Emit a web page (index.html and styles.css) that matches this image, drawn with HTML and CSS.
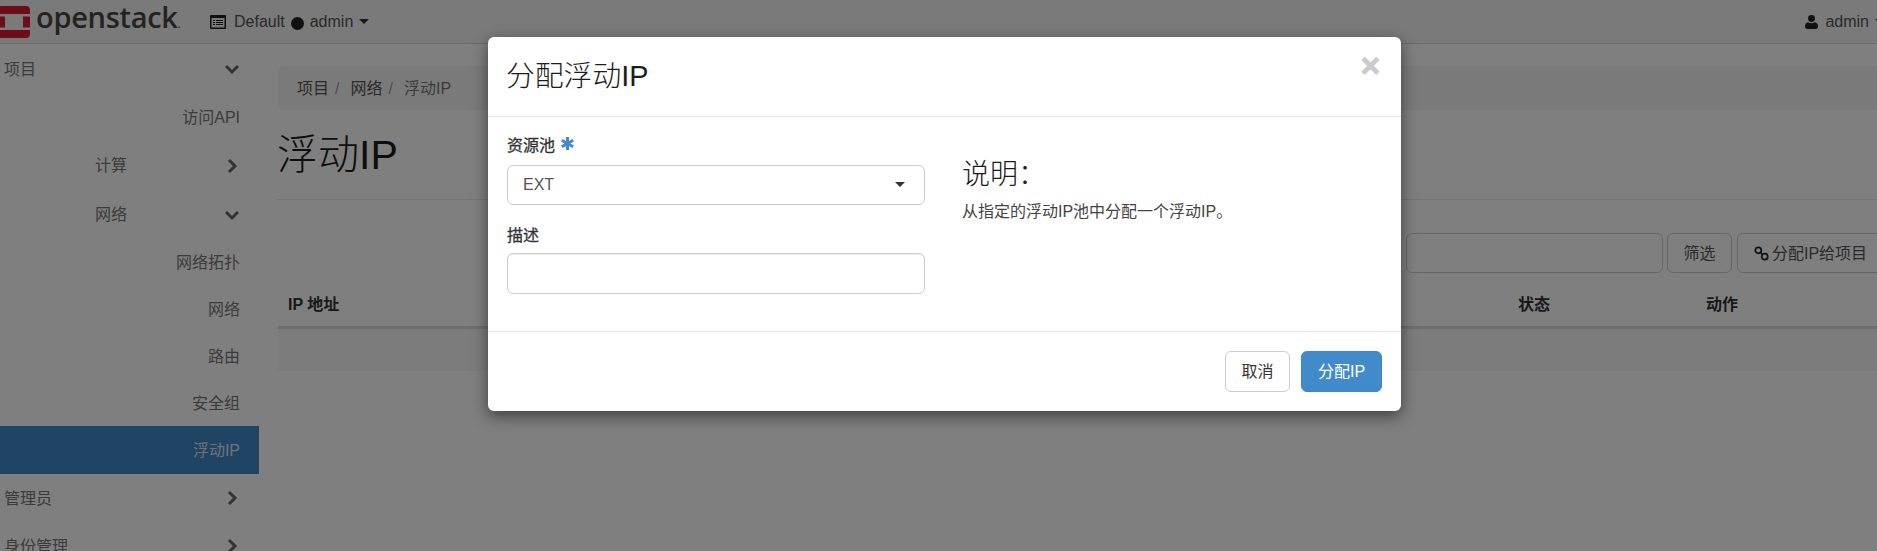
FILE: index.html
```html
<!DOCTYPE html>
<html lang="zh-CN">
<head>
<meta charset="utf-8">
<title>浮动IP</title>
<link rel="stylesheet" href="styles.css">
</head>
<body>
<div class="page">
  <header class="navbar">
    <div class="brand">
      <svg class="brand-mark" width="32" height="32" viewBox="0 0 32 32"><path fill="#dc1a34" fill-rule="evenodd" d="M4 0h24a4 4 0 0 1 4 4v24a4 4 0 0 1-4 4H4a4 4 0 0 1-4-4V4a4 4 0 0 1 4-4zM7 8h18v16H7zM0 8h7v2.500H0zM0 21.500h7V24H0zM25 8h7v2.500h-7zM25 21.500h7V24h-7z"/></svg>
      <span class="brand-name">openstack<span class="brand-dot">.</span></span>
    </div>
    <div class="nav-context">
      <svg class="nav-icon" width="16" height="14" viewBox="0 0 16 14"><path fill="#222" fill-rule="evenodd" d="M1 0h14a1 1 0 0 1 1 1v12a1 1 0 0 1-1 1H1a1 1 0 0 1-1-1V1a1 1 0 0 1 1-1zm.5 3v9.500h13V3zM3 5h2v1H3zm3 0h7v1H6zM3 7h2v1H3zm3 0h7v1H6zM3 9h2v1H3zm3 0h7v1H6z"/></svg>
      <span>Default</span>
      <span class="nav-dot"></span>
      <span>admin</span>
      <span class="caret"></span>
    </div>
    <div class="nav-user">
      <svg width="13" height="14" viewBox="0 0 13 14"><path fill="#222" d="M6.500 0a3.400 3.400 0 0 1 3.400 3.500 3.400 3.400 0 0 1-6.800 0A3.400 3.400 0 0 1 6.500 0zM3.200 7.200c1 .8 2.100 1.100 3.300 1.100s2.300-.3 3.300-1.100c2 .2 3.200 1.800 3.200 4.300 0 1.500-.9 2.500-2.400 2.500H2.400C.9 14 0 13 0 11.500c0-2.500 1.200-4.100 3.200-4.300z"/></svg>
      <span>admin</span>
      <span class="caret"></span>
    </div>
  </header>

  <div class="layout">
    <nav class="sidebar">
      <a class="side-row side-top"><span>项目</span><svg class="chev" width="16" height="16" viewBox="0 0 16 16"><path d="M2 5l6 6 6-6"/></svg></a>
      <a class="side-row side-leaf"><span>访问API</span></a>
      <a class="side-row side-group side-tall"><span>计算</span><svg class="chev" width="16" height="16" viewBox="0 0 16 16"><path d="M5 2l6 6-6 6"/></svg></a>
      <a class="side-row side-group side-tall"><span>网络</span><svg class="chev" width="16" height="16" viewBox="0 0 16 16"><path d="M2 5l6 6 6-6"/></svg></a>
      <a class="side-row side-leaf side-short"><span>网络拓扑</span></a>
      <a class="side-row side-leaf side-short"><span>网络</span></a>
      <a class="side-row side-leaf side-short"><span>路由</span></a>
      <a class="side-row side-leaf side-shorter"><span>安全组</span></a>
      <a class="side-row side-leaf side-active"><span>浮动IP</span></a>
      <a class="side-row side-top"><span>管理员</span><svg class="chev" width="16" height="16" viewBox="0 0 16 16"><path d="M5 2l6 6-6 6"/></svg></a>
      <a class="side-row side-top"><span>身份管理</span><svg class="chev" width="16" height="16" viewBox="0 0 16 16"><path d="M5 2l6 6-6 6"/></svg></a>
    </nav>

    <main class="main">
      <ol class="breadcrumb">
        <li class="crumb-link">项目</li>
        <li class="crumb-sep">/</li>
        <li class="crumb-link">网络</li>
        <li class="crumb-sep">/</li>
        <li class="crumb-current">浮动IP</li>
      </ol>
      <h1 class="page-title">浮动IP</h1>
      <div class="toolbar">
        <div class="filter-input"></div>
        <button class="btn btn-filter">筛选</button>
        <button class="btn btn-assign">
          <svg width="15" height="15" viewBox="0 0 15 15"><g fill="none" stroke="#222" stroke-width="1.700"><circle cx="4.300" cy="4.300" r="3"/><circle cx="10.700" cy="10.700" r="3"/><path d="M6.500 6.500l2 2"/></g></svg>
          <span>分配IP给项目</span>
        </button>
      </div>
      <div class="table-head">
        <span>IP 地址</span>
        <span>状态</span>
        <span>动作</span>
      </div>
      <div class="table-row"></div>
    </main>
  </div>

  <div class="backdrop"></div>

  <section class="modal">
    <div class="modal-header">
      <h2 class="modal-title">分配浮动IP</h2>
      <span class="modal-close">×</span>
    </div>
    <div class="modal-body">
      <form class="modal-form">
        <div class="label label-required">
          <span>资源池</span>
          <svg width="13" height="13" viewBox="0 0 13 13"><path fill="none" stroke="#428bca" stroke-width="3" d="M6.500 0v13M.8 3.200l11.400 6.600M.8 9.800l11.400-6.600"/></svg>
        </div>
        <div class="select"><span>EXT</span><span class="caret"></span></div>
        <div class="label label-desc">描述</div>
        <div class="input"></div>
      </form>
      <div class="modal-help">
        <h3 class="help-title">说明：</h3>
        <p class="help-text">从指定的浮动IP池中分配一个浮动IP。</p>
      </div>
    </div>
    <div class="modal-footer">
      <button class="btn btn-cancel">取消</button>
      <button class="btn btn-primary">分配IP</button>
    </div>
  </section>
</div>
</body>
</html>
```
FILE: styles.css
```css
* { box-sizing: border-box; }

html, body {
  margin: 0;
  height: 100%;
  overflow: hidden;
}

body {
  font-family: "Liberation Sans", "Noto Sans CJK SC", sans-serif;
  font-size: 16px;
  line-height: 23px;
  color: #333;
  background: #fff;
}

.page {
  position: relative;
  width: 1877px;
  height: 551px;
  overflow: hidden;
}

/* Navbar */
.navbar {
  display: flex;
  align-items: center;
  width: 1900px;
  height: 44px;
  background: #f4f4f4;
  border-bottom: 1px solid #d4d4d4;
}

.brand {
  display: flex;
  align-items: center;
  width: 212px;
  margin-left: -2px;
  padding-top: 1px;
}

.brand-mark { display: block; margin-right: 6px; }

.brand-name {
  font-family: "Open Sans", sans-serif;
  font-size: 29px;
  line-height: 32px;
  font-weight: 600;
  letter-spacing: -0.3px;
  color: #4b4745;
  margin-top: -3px;
}

.brand-dot { font-size: 12px; color: #888; letter-spacing: 0; }

.nav-context {
  display: flex;
  align-items: center;
  color: #555;
}

.nav-icon { margin-right: 8px; }

.nav-dot {
  width: 13px;
  height: 13px;
  margin: 3px 6px 0 6px;
  border-radius: 50%;
  background: #222;
}

.caret {
  display: inline-block;
  width: 0;
  height: 0;
  border-left: 5px solid transparent;
  border-right: 5px solid transparent;
  border-top: 5px solid #333;
}

.nav-context .caret { margin-left: 6px; }

.nav-user {
  display: flex;
  align-items: center;
  gap: 7px;
  margin-left: auto;
  padding-right: 15px;
  color: #555;
}

.nav-user .caret { margin-left: -1px; }

/* Layout */
.layout { display: flex; }

.sidebar {
  flex: 0 0 278px;
  padding-top: 1px;
}

.side-row {
  display: flex;
  align-items: center;
  width: 259px;
  height: 48px;
  padding-right: 19px;
  color: #777;
}

.side-tall { height: 49px; }
.side-short { height: 47px; }
.side-shorter { height: 46px; }

.side-top { justify-content: space-between; padding-left: 4px; }
.side-group { justify-content: space-between; padding-left: 95px; }
.side-leaf { justify-content: flex-end; }
.side-active { background: #3e88c9; color: #dfe6ed; }

.chev {
  fill: none;
  stroke: #666;
  stroke-width: 3;
}

/* Main */
.main {
  width: 1607px;
  flex: 0 0 auto;
  padding-top: 22px;
}

.breadcrumb {
  display: flex;
  align-items: center;
  height: 44px;
  margin: 0;
  padding: 1px 19px 0;
  list-style: none;
  background: #f5f5f5;
  border-radius: 6px;
}

.crumb-link { color: #555; }
.crumb-sep { color: #999; margin: 0 11px 0 6px; }
.crumb-current { color: #777; }

.page-title {
  height: 90px;
  margin: 0 0 0 -1px;
  padding: 23px 0 0;
  font-size: 41px;
  line-height: 44px;
  font-weight: 300;
  color: #1c1c1c;
  border-bottom: 1px solid #e8e8e8;
}

.toolbar {
  display: flex;
  justify-content: flex-end;
  margin-top: 33px;
  height: 40px;
}

.filter-input {
  width: 257px;
  margin-right: 4px;
  background: #fff;
  border: 1px solid #ccc;
  border-radius: 6px;
}

.btn {
  font-family: inherit;
  font-size: 16px;
  line-height: 23px;
  color: #333;
  background: #fff;
  border: 1px solid #ccc;
  border-radius: 6px;
  padding: 0;
}

.btn-filter { width: 65px; margin-right: 5px; color: #555; }

.btn-assign {
  display: flex;
  align-items: center;
  gap: 3px;
  width: 148px;
  padding-left: 16px;
  color: #555;
}

.table-head {
  display: grid;
  grid-template-columns: 1230px 188px 1fr;
  height: 56px;
  padding-top: 20px;
  font-weight: 700;
  color: #333;
  border-bottom: 3px solid #ddd;
}

.table-head span { padding-left: 10px; }

.table-row {
  height: 42px;
  background: #f9f9f9;
}

/* Modal overlay */
.backdrop {
  position: absolute;
  inset: 0;
  background: rgba(0, 0, 0, 0.5);
}

.modal {
  position: absolute;
  top: 37px;
  left: 488px;
  width: 913px;
  background: #fff;
  border-radius: 6px;
  box-shadow: 0 5px 15px rgba(0, 0, 0, 0.5);
}

.modal-header {
  display: flex;
  justify-content: space-between;
  align-items: flex-start;
  height: 80px;
  padding: 19px 21px 0 18px;
  border-bottom: 1px solid #e5e5e5;
}

.modal-title {
  margin: 0;
  font-size: 28.8px;
  line-height: 40px;
  font-weight: 300;
  color: #1c1c1c;
}

.modal-close {
  font-size: 33px;
  line-height: 40px;
  font-weight: 700;
  color: #000;
  opacity: 0.2;
  -webkit-text-stroke: 1.2px #000;
  margin-top: -10px;
}

.modal-body {
  display: grid;
  grid-template-columns: 418px 1fr;
  column-gap: 37px;
  height: 214px;
  padding: 17px 19px 0;
}

.label {
  display: flex;
  align-items: flex-start;
  height: 23px;
  font-weight: 400;
  color: #333;
  -webkit-text-stroke: 0.3px #333;
}

.label-required { gap: 6px; margin-bottom: 8px; }
.label-required svg { margin-top: 3px; }
.label-desc { margin-top: 19px; margin-bottom: 6px; }

.select {
  display: flex;
  align-items: center;
  justify-content: space-between;
  height: 40px;
  padding: 0 19px 2px 15px;
  color: #555;
  border: 1px solid #ccc;
  border-radius: 6px;
}

.input {
  height: 41px;
  border: 1px solid #ccc;
  border-radius: 6px;
  box-shadow: inset 0 1px 1px rgba(0, 0, 0, 0.075);
}

.help-title {
  margin: 0;
  padding-top: 21px;
  font-size: 28px;
  line-height: 40px;
  font-weight: 300;
  color: #1c1c1c;
}

.help-text {
  margin: 5px 0 0;
  color: #444;
}

.modal-footer {
  display: flex;
  justify-content: flex-end;
  gap: 11px;
  height: 80px;
  padding: 19px;
  border-top: 1px solid #e5e5e5;
}

.btn-cancel { width: 65px; height: 41px; }

.btn-primary {
  width: 81px;
  height: 41px;
  color: #fff;
  background: #428bca;
  border-color: #3f86c4;
}
```
